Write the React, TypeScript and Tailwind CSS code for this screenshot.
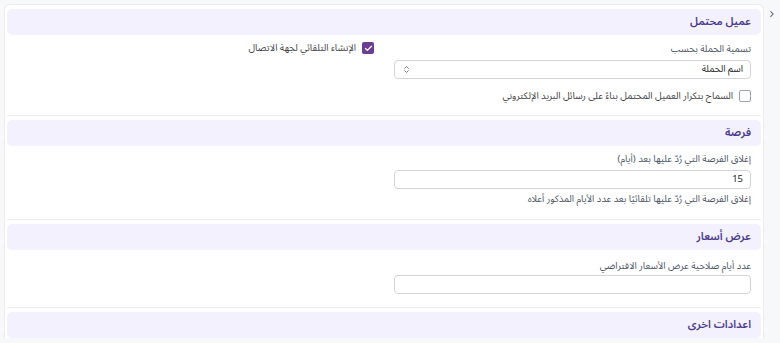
import { ChevronRight, ChevronsUpDown, Check } from 'lucide-react';

function SectionHeader({ title }: { title: string }) {
  return (
    <div className="flex h-[26px] items-center rounded-[5px] bg-[#f2f1fd] px-[10px]">
      <h2 className="text-[11px] font-semibold text-[#4a3a8c]">{title}</h2>
    </div>
  );
}

function CheckBox({ checked, label }: { checked?: boolean; label: string }) {
  return (
    <label className="flex h-[12px] items-center gap-[6px] text-[9.5px] leading-[12px] text-[#3f3f46]">
      {checked ? (
        <span className="flex h-[12px] w-[12px] shrink-0 items-center justify-center rounded-[2px] bg-[#6b3d92]">
          <Check className="h-[9px] w-[9px] text-white" strokeWidth={3.5} />
        </span>
      ) : (
        <span className="h-[12px] w-[12px] shrink-0 rounded-[2px] border border-[#9ca3af] bg-white" />
      )}
      <span>{label}</span>
    </label>
  );
}

export default function App() {
  return (
    <div
      className="flex h-[343px] w-[780px] overflow-hidden bg-[#f7f8fa]"
      style={{ fontFamily: '"Noto Sans Arabic", "DejaVu Sans", sans-serif' }}
    >
      <div className="ml-[4px] mt-[4px] w-[760px]">
        <div dir="rtl" className="rounded-t-[6px] border border-b-0 border-[#ececee] bg-white px-[2px] pt-[4px]">
          {/* عميل محتمل */}
          <section className="mb-[4px] border-b border-[#ececee]">
            <SectionHeader title="عميل محتمل" />
            <div className="grid grid-cols-2 gap-x-[20px] px-[10px] pb-[13px] pt-[6px]">
              <div>
                <div className="text-[9.5px] leading-[16px] text-[#4b5563]">تسمية الحملة بحسب</div>
                <div className="mt-[3px] flex h-[19px] items-center justify-between rounded-[4px] border border-[#d4d4d8] bg-white px-[7px] text-[9.5px] text-[#27272a]">
                  <span>اسم الحملة</span>
                  <ChevronsUpDown className="h-[9px] w-[9px] text-[#52525b]" strokeWidth={2} />
                </div>
              </div>
              <div className="pt-[1px]">
                <CheckBox checked label="الإنشاء التلقائي لجهة الاتصال" />
              </div>
              <div className="mt-[11px]">
                <CheckBox label="السماح بتكرار العميل المحتمل بناءً على رسائل البريد الإلكتروني" />
              </div>
            </div>
          </section>

          {/* فرصة */}
          <section className="mb-[4px] border-b border-[#ececee]">
            <SectionHeader title="فرصة" />
            <div className="grid grid-cols-2 gap-x-[20px] px-[10px] pb-[12px] pt-[5px]">
              <div>
                <div className="text-[9.5px] leading-[16px] text-[#4b5563]">إغلاق الفرصة التي رُدّ عليها بعد (أيام)</div>
                <div className="mt-[3px] flex h-[19px] items-center rounded-[4px] border border-[#d4d4d8] bg-white px-[7px] text-[9.5px] text-[#27272a]">
                  15
                </div>
                <div className="mt-[2px] text-[9.5px] leading-[16px] text-[#4b5563]">
                  إغلاق الفرصة التي رُدّ عليها تلقائيًا بعد عدد الأيام المذكور أعلاه
                </div>
              </div>
            </div>
          </section>

          {/* عرض أسعار */}
          <section className="mb-[4px] border-b border-[#ececee]">
            <SectionHeader title="عرض أسعار" />
            <div className="grid grid-cols-2 gap-x-[20px] px-[10px] pb-[13px] pt-[8px]">
              <div>
                <div className="text-[9.5px] leading-[16px] text-[#4b5563]">عدد أيام صلاحية عرض الأسعار الافتراضي</div>
                <div className="mt-[1px] h-[19px] rounded-[4px] border border-[#d4d4d8] bg-white" />
              </div>
            </div>
          </section>

          {/* اعدادات اخرى */}
          <section>
            <SectionHeader title="اعدادات اخرى" />
          </section>
        </div>
      </div>
      <div className="flex w-[16px] justify-center pt-[9px]">
        <ChevronRight className="h-[10px] w-[10px] text-[#52525b]" strokeWidth={2.5} />
      </div>
    </div>
  );
}
